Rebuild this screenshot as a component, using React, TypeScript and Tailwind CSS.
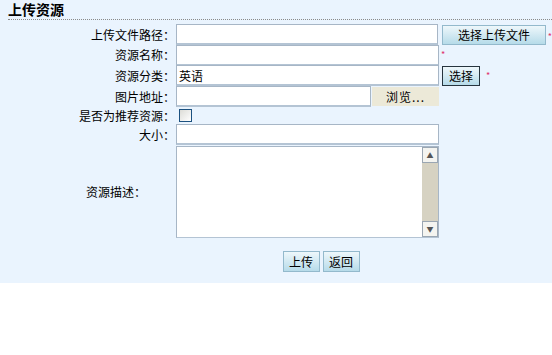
import React from "react";

const font = { fontFamily: '"Noto Sans CJK SC", "Liberation Sans", sans-serif' };

const Label: React.FC<{ text: string }> = ({ text }) => (
  <div className="w-[176px] shrink-0 pr-[1px] text-right text-[12px] leading-none text-black">
    {text}
  </div>
);

const Star: React.FC<{ className?: string }> = ({ className = "" }) => (
  <span className={`text-[9px] leading-none text-[#e0306a] ${className}`}>*</span>
);

const inputCls =
  "h-[21px] border border-[#a7b6c6] border-b-2 border-b-[#b4c4d4] bg-white px-[2px] text-[12px] leading-none outline-none";

const blueBtn =
  "flex items-center justify-center bg-gradient-to-b from-[#eef7fb] to-[#b6dbe9] text-[12px] leading-none text-black";

export default function App() {
  return (
    <div style={font} className="w-[552px] h-[355px] bg-white">
      <div className="h-[283px] bg-[#eaf4fe]">
        <div className="px-[8px] h-[19px] pt-[1px] text-[14px] font-bold leading-[16px] text-black">
          上传资源
        </div>
        <div className="ml-[8px] border-t border-dotted border-[#8a8a8a]" />

        <div className="mt-[4px] flex flex-col">
          {/* 上传文件路径 */}
          <div className="flex h-[21px] items-center">
            <Label text="上传文件路径：" />
            <input className={`${inputCls} w-[263px]`} />
            <button
              className={`${blueBtn} ml-[4px] h-[20px] w-[104px] border border-[#93b9cc]`}
            >
              选择上传文件
            </button>
            <Star className="ml-[2px] mt-[3px]" />
          </div>

          {/* 资源名称 */}
          <div className="flex h-[20px] items-center">
            <Label text="资源名称：" />
            <input className={`${inputCls} w-[263px]`} />
            <Star className="ml-[2px] mt-[-2px]" />
          </div>

          {/* 资源分类 */}
          <div className="flex h-[21px] items-center">
            <Label text="资源分类：" />
            <input className={`${inputCls} w-[263px]`} defaultValue="英语" />
            <button
              className={`${blueBtn} ml-[3px] h-[20px] w-[38px] border border-[#26343e]`}
            >
              选择
            </button>
            <Star className="ml-[6px]" />
          </div>

          {/* 图片地址 */}
          <div className="flex h-[21px] items-center">
            <Label text="图片地址：" />
            <input className={`${inputCls} w-[195px]`} />
            <button className="ml-[1px] h-[19px] w-[67px] bg-[#ece9d8] text-[12px] leading-none tracking-[1px] text-black">
              浏览...
            </button>
          </div>

          {/* 是否为推荐资源 */}
          <div className="flex h-[17px] items-center">
            <Label text="是否为推荐资源：" />
            <div className="ml-[3px] h-[13px] w-[13px] border border-[#1c5180] bg-gradient-to-br from-[#dcdcd7] to-white" />
          </div>

          {/* 大小 */}
          <div className="flex h-[21px] items-center">
            <Label text="大小：" />
            <input className={`${inputCls} w-[263px]`} />
          </div>

          {/* 资源描述 */}
          <div className="mt-[1px] flex h-[92px] items-center">
            <div className="w-[176px] shrink-0 pl-[86px] text-[12px] leading-none text-black">
              资源描述：
            </div>
            <div className="flex h-[92px] w-[263px] border border-[#a7b6c6] border-b-[#b4c4d4] bg-white">
              <div className="flex-1" />
              <div className="flex w-[16px] flex-col bg-[#d6d2c2]">
                <div className="flex h-[16px] items-center justify-center border border-[#9aa6b2] bg-[#f4f4f0] text-[7px] leading-none text-[#555]">
                  ▲
                </div>
                <div className="flex-1" />
                <div className="flex h-[16px] items-center justify-center border border-[#9aa6b2] bg-[#f4f4f0] text-[7px] leading-none text-[#555]">
                  ▼
                </div>
              </div>
            </div>
          </div>
        </div>

        <div className="mt-[13px] flex justify-center gap-[3px] pl-[90px]">
          <button className={`${blueBtn} h-[21px] w-[37px] border border-[#93b9cc]`}>
            上传
          </button>
          <button className={`${blueBtn} h-[21px] w-[37px] border border-[#93b9cc]`}>
            返回
          </button>
        </div>
      </div>
    </div>
  );
}
